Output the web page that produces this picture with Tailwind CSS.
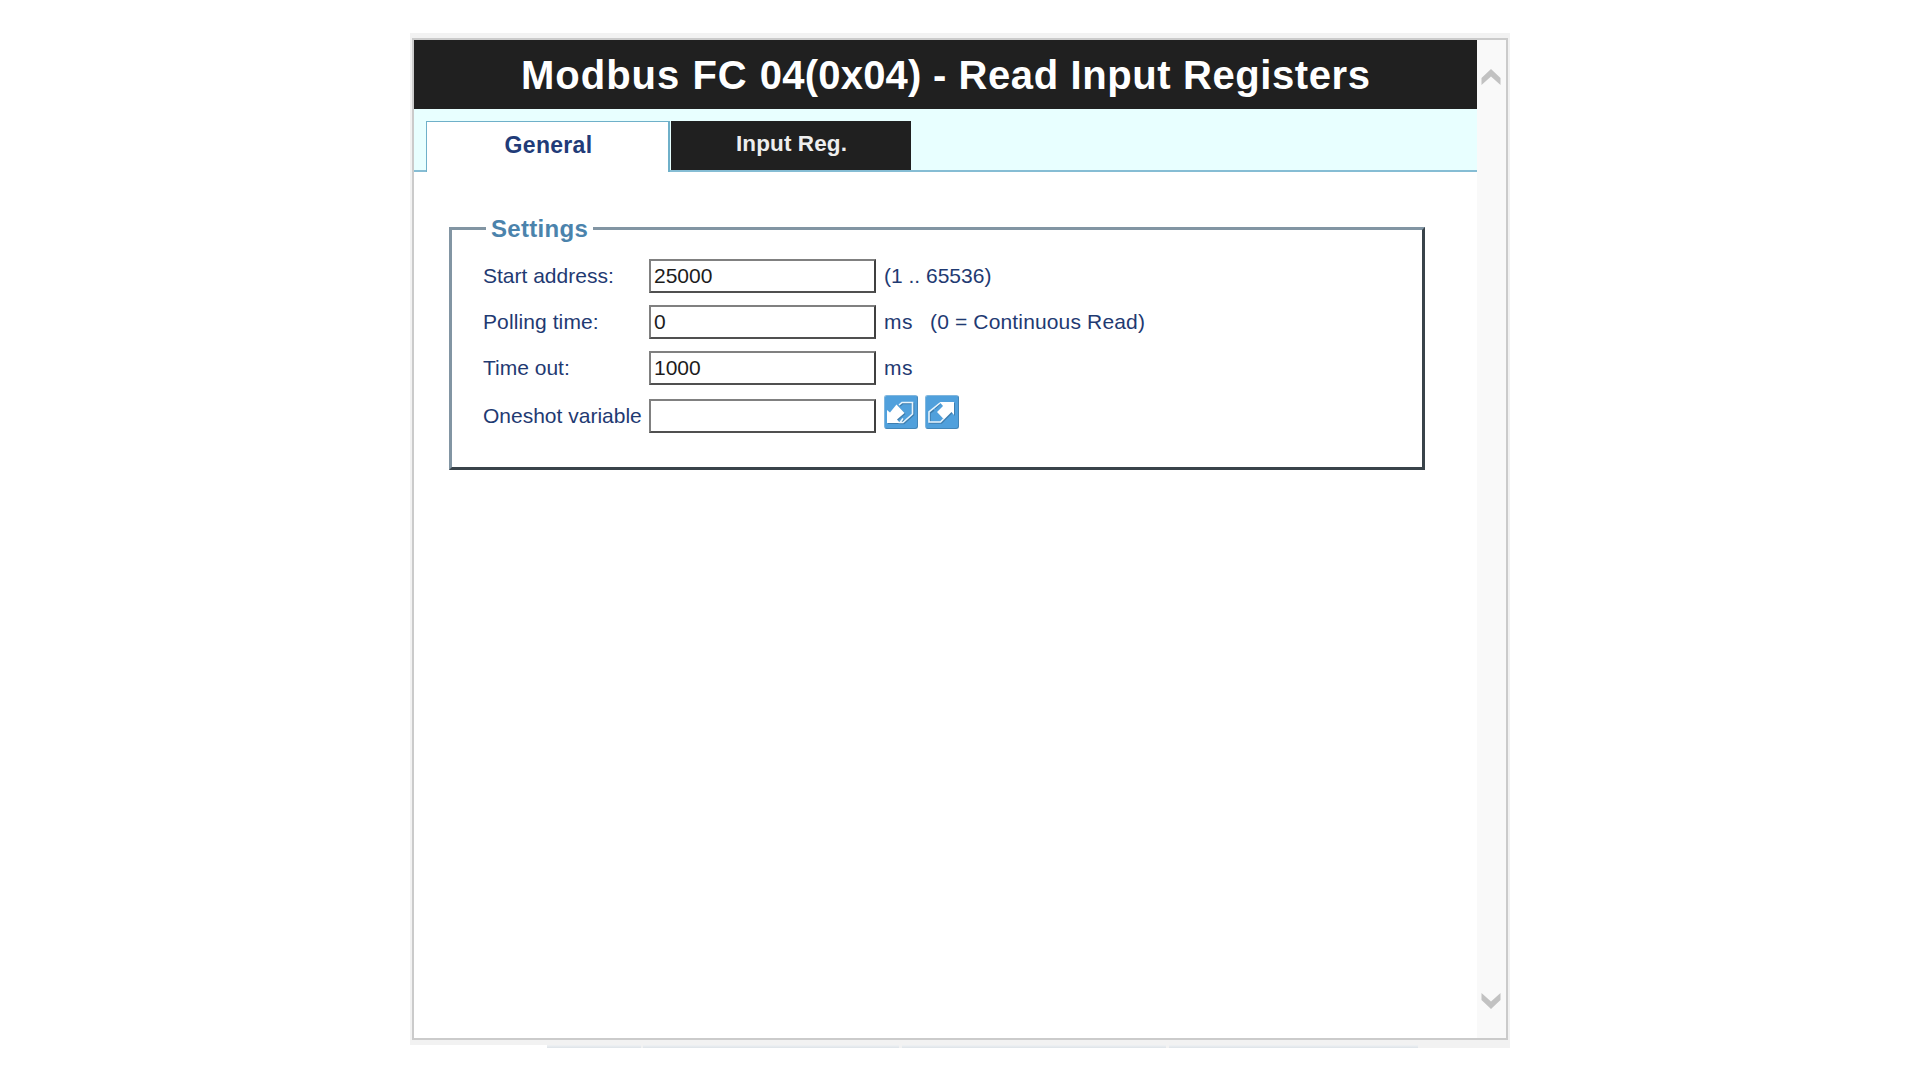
<!DOCTYPE html>
<html lang="en">
<head>
<meta charset="utf-8">
<title>Modbus FC 04(0x04) - Read Input Registers</title>
<script src="https://cdn.jsdelivr.net/npm/@tailwindcss/browser@4"></script>
</head>
<body class="h-[1080px] overflow-hidden bg-white pt-[33px] pl-[410px] font-['Liberation_Sans',Arial,sans-serif] text-[21px] leading-6 text-[#1f3a72]">
<div class="w-[1100px]">
  <div class="h-[1012px] bg-[#f2f2f2] pt-[5px] pr-0.5 pl-0.5">
    <main class="flex h-[1002px] border-2 border-[#cbcbcb] bg-white">
      <div class="flex w-[1063px] flex-col">
        <h1 class="flex h-[69px] items-center bg-[#202020] pt-px pl-[107px] text-[40px] font-bold tracking-[0.6px] whitespace-pre text-white"><span class="tracking-[1px]">Modbus FC </span><span class="tracking-[0.2px]">04(0x04) </span>- Read Input Registers</h1>
        <nav class="flex h-[63px] bg-[#e8ffff] pt-3 font-bold">
          <div class="w-3 border-b-2 border-[#86bdd4]"></div>
          <div class="flex w-[244px] items-center justify-center border-t border-r-2 border-l border-[#6fb0c9] bg-white pb-1 pl-0.5 text-[23px] tracking-[0.3px] text-[#213b78]">General</div>
          <div class="w-px border-b-2 border-[#86bdd4]"></div>
          <div class="flex w-[240px] items-center justify-center border-b-2 border-[#86bdd4] bg-[#202020] bg-clip-padding pb-1 pl-px text-[22.5px] tracking-[0.1px] text-[#eeeeee]">Input Reg.</div>
          <div class="grow border-b-2 border-[#86bdd4]"></div>
        </nav>
        <fieldset class="mt-[42px] ml-[35px] h-[256px] w-[976px] border-[3px] border-t-[#8295a3] border-r-[#39434a] border-b-[#39434a] border-l-[#8295a3] pl-[31px]">
          <legend class="ml-[3px] px-[5px] pt-px text-[24px] leading-7 font-bold tracking-[0.3px] text-[#4b83ac]">Settings</legend>
          <div class="flex flex-col gap-3 pt-[16px]">
            <div class="flex h-[34px] items-center">
              <label for="start" class="w-[166px] whitespace-nowrap">Start address:</label>
              <input id="start" value="25000" class="h-[34px] w-[227px] border-2 border-t-[#808080] border-r-[#404040] border-b-[#505050] border-l-[#808080] pl-[3px] text-[#1c1c1c]">
              <span class="ml-2">(1 .. 65536)</span>
            </div>
            <div class="flex h-[34px] items-center">
              <label for="poll" class="w-[166px] tracking-[0.1px] whitespace-nowrap">Polling time:</label>
              <input id="poll" value="0" class="h-[34px] w-[227px] border-2 border-t-[#808080] border-r-[#404040] border-b-[#505050] border-l-[#808080] pl-[3px] text-[#1c1c1c]">
              <span class="ml-2 tracking-[0.5px]">ms</span>
              <span class="ml-[17px] tracking-[0.15px]">(0 = Continuous Read)</span>
            </div>
            <div class="flex h-[34px] items-center">
              <label for="timeout" class="w-[166px] whitespace-nowrap">Time out:</label>
              <input id="timeout" value="1000" class="h-[34px] w-[227px] border-2 border-t-[#808080] border-r-[#404040] border-b-[#505050] border-l-[#808080] pl-[3px] text-[#1c1c1c]">
              <span class="ml-2 tracking-[0.5px]">ms</span>
            </div>
            <div class="mt-0.5 flex h-[34px] items-center">
              <label for="oneshot" class="w-[166px] whitespace-nowrap">Oneshot variable</label>
              <input id="oneshot" class="h-[34px] w-[227px] border-2 border-t-[#808080] border-r-[#404040] border-b-[#505050] border-l-[#808080] pl-[3px] text-[#1c1c1c]">
              <div class="mb-2 ml-2 flex gap-[7px]">
                <button class="h-[34px] w-[34px] rounded-[3px] border border-t-[#7fb6de] border-r-[#4386b8] border-b-[#4386b8] border-l-[#7fb6de] bg-[#50a0dc]" aria-label="Import">
                  <svg viewBox="1 1 32 32" class="size-8" fill="none">
                    <g transform="translate(1 1)" stroke="#3f7eae" stroke-width="1.600"><path d="M15 10l3-2.500h10.500V19l-9.500 8.500h-3l3-4"/><path d="M3 15v13h13l-3-3.500 7.500-6.500-8-8.500L6 17.500z" fill="#3f7eae" stroke="none"/></g>
                    <path d="M15 10l3-2.500h10.500V19l-9.500 8.500h-3l3-4" stroke="#e8f4fc" stroke-width="1.600"/>
                    <path d="M3 15v13h13l-3-3.500 7.500-6.500-8-8.500L6 17.500z" fill="#fff"/>
                  </svg>
                </button>
                <button class="h-[34px] w-[34px] rounded-[3px] border border-t-[#7fb6de] border-r-[#4386b8] border-b-[#4386b8] border-l-[#7fb6de] bg-[#50a0dc]" aria-label="Export">
                  <svg viewBox="1 1 32 32" class="size-8" fill="none">
                    <g transform="translate(1 1)" stroke="#3f7eae" stroke-width="1.600"><path d="M14 8l-5 4.500M8 14l-4 3V27h11.500l3-3"/><path d="M14.500 7H29v13l-2.500-3-7.500 7.500-7-7.500 6-6z" fill="#3f7eae" stroke="none"/></g>
                    <path d="M15 8l-11 9V27h11.500l3-3" stroke="#e8f4fc" stroke-width="1.600"/>
                    <path d="M14.500 7H29v13l-2.500-3-7.500 7.500-7-7.500 6-6z" fill="#fff"/>
                  </svg>
                </button>
              </div>
            </div>
          </div>
        </fieldset>
      </div>
      <div class="flex w-[29px] flex-col items-center justify-between bg-[#f9f9f9] pt-[29px] pr-px pb-[29px]">
        <svg class="h-4 w-5" viewBox="0 0 20 16"><path d="M10 0l9.500 9v7L10 7.500.5 16V9z" fill="#c2c2c2"/></svg>
        <svg class="h-4 w-5" viewBox="0 0 20 16"><path d="M10 16l9.500-9V0L10 8.500.5 0v7z" fill="#c2c2c2"/></svg>
      </div>
    </main>
  </div>
  <div class="flex h-[3px] bg-[#f2f2f2]">
    <div class="w-[137px] bg-white"></div>
    <div class="mr-0.5 w-[94px] bg-linear-to-b from-[#f0f2f4] to-[#dde3e8]"></div>
    <div class="mr-[3px] w-[256px] bg-linear-to-b from-[#f0f2f4] to-[#dde3e8]"></div>
    <div class="mr-[3px] w-[264px] bg-linear-to-b from-[#f0f2f4] to-[#dde3e8]"></div>
    <div class="w-[249px] bg-linear-to-b from-[#f0f2f4] to-[#dde3e8]"></div>
  </div>
</div>
</body>
</html>
